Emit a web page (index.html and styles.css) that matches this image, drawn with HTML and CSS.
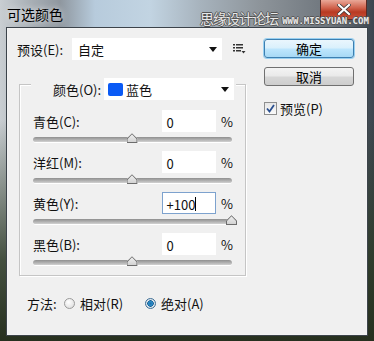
FILE: index.html
```html
<!DOCTYPE html>
<html>

<head>
  <meta charset="utf-8">
  <title>可选颜色</title>
  <link rel="stylesheet" href="styles.css">
</head>

<body>
  <div class="window">
    <div class="titlebar">
      <span class="title">可选颜色</span>
      <span class="watermark">思缘设计论坛 <span class="url">WWW.MISSYUAN.COM</span></span>
      <span class="close">
        <svg width="14" height="11" viewBox="0 0 14 11">
          <path d="M2 1 L12 10 M12 1 L2 10" stroke="#333" stroke-width="3.6" stroke-linecap="square" />
          <path d="M2 1 L12 10 M12 1 L2 10" stroke="#fff" stroke-width="2.2" stroke-linecap="square" />
        </svg>
      </span>
    </div>

    <div class="client">
      <div class="main">
        <div class="preset-row">
          <span class="label">预设(E):</span>
          <div class="select preset-select"><span>自定</span><i class="arrow"></i></div>
          <svg class="menu-icon" width="13" height="10" viewBox="0 0 13 10">
            <rect x="0" y="0" width="2" height="1.5" fill="#333" />
            <rect x="3" y="0" width="7" height="1.5" fill="#333" />
            <rect x="0" y="3" width="2" height="1.5" fill="#333" />
            <rect x="3" y="3" width="7" height="1.5" fill="#333" />
            <rect x="0" y="6" width="2" height="1.5" fill="#333" />
            <rect x="3" y="6" width="5" height="1.5" fill="#333" />
            <path d="M8.5 7 L12.5 7 L10.5 9.5 Z" fill="#333" />
          </svg>
        </div>

        <div class="group">
          <div class="legend">
            <span class="label">颜色(O):</span>
            <div class="select color-select"><b class="swatch"></b><span>蓝色</span><i class="arrow"></i></div>
          </div>

          <div class="channel">
            <div class="channel-head">
              <span class="label">青色(C):</span>
              <div class="field">0</div>
              <span class="pct">%</span>
            </div>
            <div class="slider"><i class="thumb" style="left: 50%"></i></div>
          </div>

          <div class="channel">
            <div class="channel-head">
              <span class="label">洋红(M):</span>
              <div class="field">0</div>
              <span class="pct">%</span>
            </div>
            <div class="slider"><i class="thumb" style="left: 50%"></i></div>
          </div>

          <div class="channel">
            <div class="channel-head">
              <span class="label">黄色(Y):</span>
              <div class="field focused">+100<i class="caret"></i></div>
              <span class="pct">%</span>
            </div>
            <div class="slider"><i class="thumb" style="left: 100%"></i></div>
          </div>

          <div class="channel">
            <div class="channel-head">
              <span class="label">黑色(B):</span>
              <div class="field">0</div>
              <span class="pct">%</span>
            </div>
            <div class="slider"><i class="thumb" style="left: 50%"></i></div>
          </div>
        </div>

        <div class="method-row">
          <span class="label">方法:</span>
          <span class="radio"></span>
          <span class="radio-text">相对(R)</span>
          <span class="radio checked"></span>
          <span class="radio-text">绝对(A)</span>
        </div>
      </div>

      <div class="side">
        <button class="btn default">确定</button>
        <button class="btn">取消</button>
        <div class="check-row">
          <span class="checkbox">
            <svg width="9" height="9" viewBox="0 0 9 9">
              <path d="M1 4.5 L3.5 7.5 L8 1" fill="none" stroke="#2a4f8f" stroke-width="1.8" />
            </svg>
          </span>
          <span class="label">预览(P)</span>
        </div>
      </div>
    </div>
  </div>
</body>

</html>
```

FILE: styles.css
```css
body {
  margin: 0px;
  padding: 0px;
  overflow: hidden;
  font-family: "Noto Sans CJK SC", "DejaVu Sans", sans-serif;
  font-size: 13px;
  color: #111;
}

.window {
  width: 374px;
  height: 341px;
  box-sizing: border-box;
  padding: 0 6px 5px 6px;
  display: flex;
  flex-direction: column;
  position: relative;
  background:
    linear-gradient(to bottom, rgba(40, 52, 34, 0) 0px, rgba(40, 52, 34, 0) 120px, rgba(45, 58, 38, 0.85) 260px, #27301f 341px),
    linear-gradient(to right, #c9ced2 0px, #a9b0b6 30px, #8f979f 60px, #b7cbdc 95px, #c2d4e2 150px, #a7b3bd 200px, #8d949a 260px, #6e757c 330px, #3b454e 374px);
}

.titlebar {
  height: 27px;
  display: flex;
  align-items: flex-start;
}

.title {
  margin: 4px 0 0 1px;
  font-size: 14px;
  color: #000;
  text-shadow: 0 0 6px rgba(255, 255, 255, 0.9);
}

.watermark {
  position: absolute;
  left: 200px;
  top: 8px;
  font-size: 14px;
  color: #e8e8e8;
  text-shadow: -1px 0 #555, 1px 0 #555, 0 -1px #555, 0 1px #555;
  white-space: nowrap;
  letter-spacing: -1px;
}

.watermark .url {
  font-family: "DejaVu Sans Mono", monospace;
  font-size: 9px;
  font-weight: bold;
  letter-spacing: 0px;
  margin-left: 2px;
}

.close {
  margin-left: auto;
  margin-right: 1px;
  width: 45px;
  height: 19px;
  border: 1px solid #5a2a24;
  border-top: none;
  border-radius: 0 0 4px 4px;
  background: linear-gradient(to bottom, #e9a898 0px, #d0614b 8px, #b83a22 12px, #c9523a 19px);
  display: flex;
  align-items: center;
  justify-content: center;
}

.client {
  flex: 1;
  background-color: #f0f0f0;
  border: 1px solid #3c434a;
  box-shadow: inset 0 0 0 1px #ffffff33;
  display: flex;
  padding: 10px 0 0 10px;
}

.main {
  width: 247px;
  display: flex;
  flex-direction: column;
}

.label {
  white-space: nowrap;
}

.preset-row {
  display: flex;
  align-items: center;
  height: 22px;
}

.preset-row .label {
  width: 55px;
}

.select {
  height: 22px;
  box-sizing: border-box;
  background-color: #fff;
  display: flex;
  align-items: center;
  padding-left: 6px;
  position: relative;
}

.preset-select {
  width: 150px;
}

.arrow {
  margin-left: auto;
  margin-right: 5px;
  width: 0;
  height: 0;
  border-left: 4px solid transparent;
  border-right: 4px solid transparent;
  border-top: 5px solid #111;
}

.menu-icon {
  margin-left: 11px;
}

.group {
  margin: 24px 0 0 2px;
  width: 227px;
  box-sizing: border-box;
  border: 1px solid #c5c5c5;
  box-shadow: inset 1px 1px 0 #fff, 1px 1px 0 #fff;
  padding: 0 12px 9px 13px;
}

.legend {
  display: flex;
  align-items: center;
  margin: -7px 0 0 -2px;
  padding-left: 22px;
  width: 205px;
  background-color: #f0f0f0;
  box-sizing: border-box;
}

.legend .label {
  width: 51px;
}

.color-select {
  width: 130px;
  padding-left: 4px;
}

.swatch {
  width: 15px;
  height: 13px;
  background-color: #0a5af5;
  border-radius: 2px;
  margin-right: 3px;
}

.channel {
  margin-top: 10px;
}

.channel+.channel {
  margin-top: 8px;
}

.channel-head {
  display: flex;
  align-items: center;
  height: 22px;
}

.channel-head .label {
  width: 130px;
}

.field {
  width: 55px;
  height: 22px;
  box-sizing: border-box;
  background-color: #fff;
  padding: 2px 0 0 5px;
  display: flex;
  align-items: center;
}

.field.focused {
  border: 1px solid #7da2ce;
  padding-left: 4px;
}

.caret {
  width: 1px;
  height: 14px;
  background-color: #000;
}

.pct {
  margin-left: 5px;
}

.slider {
  position: relative;
  margin: 5px 0 0 0;
  width: 199px;
  height: 5px;
  border-radius: 3px;
  background: linear-gradient(to bottom, #8f8f8f, #b5b5b5 60%, #d2d2d2);
  border-bottom: 1px solid #fff;
}

.thumb {
  position: absolute;
  top: -4px;
  width: 11px;
  height: 10px;
  margin-left: -6px;
  background: linear-gradient(to bottom, #f4f4f4, #cfcfcf);
  clip-path: polygon(50% 0, 100% 55%, 100% 100%, 0 100%, 0 55%);
}

.thumb::before {
  content: "";
  position: absolute;
  inset: 0;
  background: #6d6d6d;
  clip-path: polygon(50% 0, 100% 55%, 100% 100%, 0 100%, 0 55%, 0 55%, 1px calc(100% - 1px), calc(100% - 1px) calc(100% - 1px), calc(100% - 1px) 60%, 50% 12%, 1px 60%, 1px calc(100% - 1px), 0 55%);
}

.method-row {
  margin: 17px 0 0 10px;
  display: flex;
  align-items: center;
  height: 20px;
}

.method-row .label {
  width: 37px;
}

.radio {
  width: 11px;
  height: 11px;
  border-radius: 50%;
  border: 1px solid #9a9a9a;
  background: radial-gradient(circle at 40% 35%, #ffffff, #d8d8d8);
  box-sizing: border-box;
  margin-right: 5px;
}

.radio.checked {
  margin-left: 22px;
  border-color: #3f6f96;
  background: radial-gradient(circle, #1e6fa8 0px, #2a8ccb 2px, #1a5f90 3px, #e8eef4 3.5px, #c8d4de 5px);
}

.side {
  width: 90px;
  margin-left: 0px;
  display: flex;
  flex-direction: column;
}

.btn {
  width: 90px;
  height: 19px;
  padding: 0;
  font-family: inherit;
  font-size: 13px;
  line-height: 15px;
  color: #000;
  border-radius: 3px;
  border: 1px solid #707070;
  background: linear-gradient(to bottom, #f4f4f4 0%, #e9e9e9 48%, #d7d7d7 52%, #cdcdcd 100%);
  margin-bottom: 9px;
}

.btn.default {
  margin-top: 1px;
  border-color: #3c7fb1;
  box-shadow: 0 0 0 1px #9ad0f0;
  background: linear-gradient(to bottom, #eaf6fd 0%, #d9f0fc 48%, #bee6fd 52%, #a7d9f5 100%);
}

.check-row {
  display: flex;
  align-items: center;
  margin-top: 4px;
}

.checkbox {
  width: 13px;
  height: 13px;
  box-sizing: border-box;
  border: 1px solid #8e8f8f;
  background: linear-gradient(to bottom, #e6e6e6, #fafafa);
  display: flex;
  align-items: center;
  justify-content: center;
  margin-right: 3px;
}
```
